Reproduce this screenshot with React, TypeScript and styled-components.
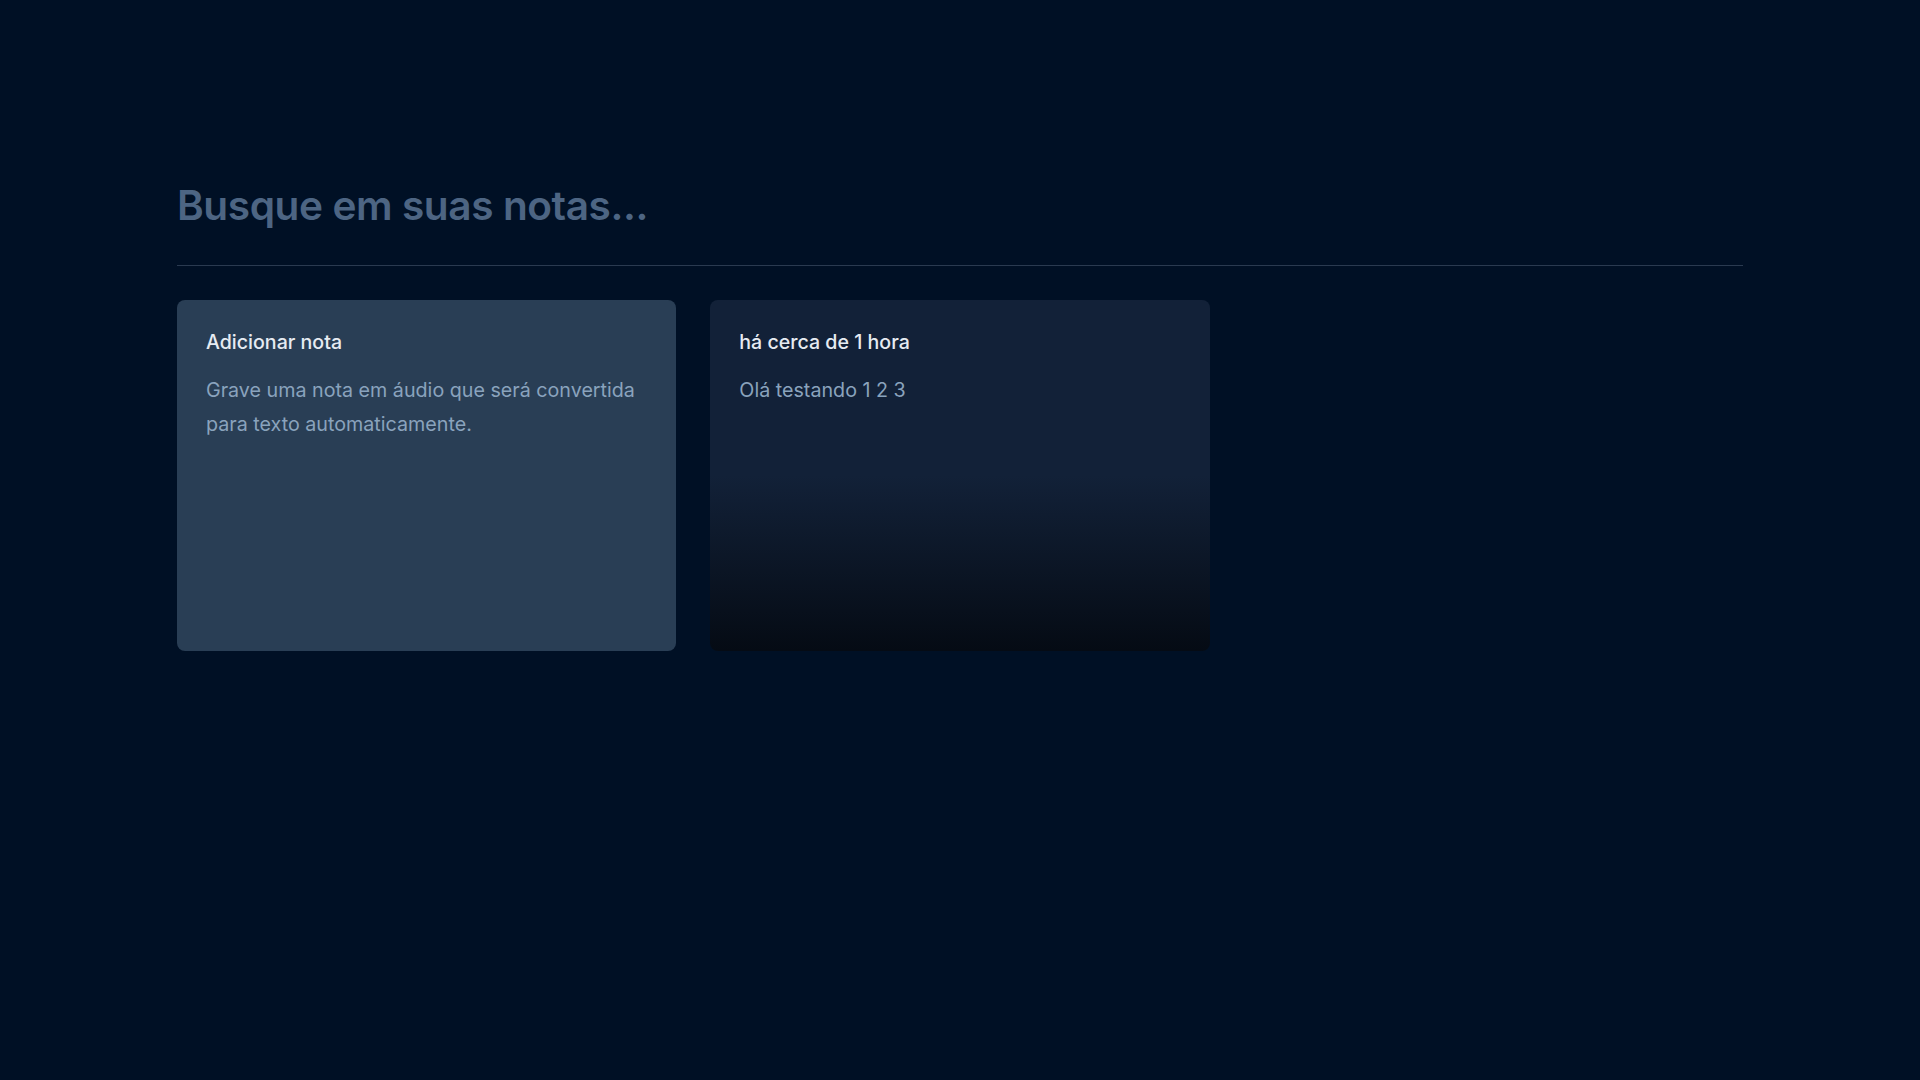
import React from 'react';
import styled, { createGlobalStyle } from 'styled-components';

interface Note {
  id: string;
  date: string;
  content: string;
}

const GlobalStyle = createGlobalStyle`
  html, body {
    margin: 0;
    padding: 0;
    background: #001025;
    font-family: Inter, "Noto Sans", sans-serif;
  }
  * {
    box-sizing: border-box;
  }
`;

const Page = styled.main`
  min-height: 100vh;
  padding: 181px 177px 0;
  display: flex;
  flex-direction: column;
  gap: 34px;
`;

const SearchForm = styled.form`
  width: 100%;
`;

const SearchInput = styled.input`
  width: 100%;
  padding: 0;
  margin: 0;
  border: none;
  outline: none;
  background: transparent;
  font-family: Inter, sans-serif;
  font-size: 40.6px;
  line-height: 50px;
  height: 50px;
  font-weight: 600;
  letter-spacing: -0.01em;
  color: #e2e8f0;

  &::placeholder {
    color: #4d6583;
  }
`;

const Divider = styled.div`
  height: 1px;
  background: #2a3a50;
`;

const Grid = styled.div`
  display: grid;
  grid-template-columns: repeat(3, 1fr);
  grid-auto-rows: 351px;
  gap: 34px;
`;

const Card = styled.button<{ $variant: 'add' | 'note' }>`
  all: unset;
  display: flex;
  flex-direction: column;
  gap: 18px;
  padding: 28px 29px;
  border-radius: 8px;
  overflow: hidden;
  cursor: pointer;
  text-align: left;
  background: ${({ $variant }) =>
    $variant === 'add'
      ? '#293e55'
      : 'linear-gradient(to bottom, #122138 0%, #122138 50%, #050b14 100%)'};
`;

const CardTitle = styled.span`
  font-size: 19.6px;
  line-height: 28px;
  font-weight: 500;
  color: #e6ebf2;
`;

const CardText = styled.p`
  margin: 0;
  font-size: 19.7px;
  line-height: 33.6px;
  color: #8aa3bd;
`;

const notes: Note[] = [
  { id: '1', date: 'há cerca de 1 hora', content: 'Olá testando 1 2 3' },
];

export default function App() {
  return (
    <>
      <GlobalStyle />
      <Page>
        <SearchForm onSubmit={(e) => e.preventDefault()}>
          <SearchInput type="text" placeholder="Busque em suas notas..." />
        </SearchForm>

        <Divider />

        <Grid>
          <Card $variant="add" type="button">
            <CardTitle>Adicionar nota</CardTitle>
            <CardText>
              Grave uma nota em áudio que será convertida para texto automaticamente.
            </CardText>
          </Card>

          {notes.map((note) => (
            <Card key={note.id} $variant="note" type="button">
              <CardTitle>{note.date}</CardTitle>
              <CardText>{note.content}</CardText>
            </Card>
          ))}
        </Grid>
      </Page>
    </>
  );
}
